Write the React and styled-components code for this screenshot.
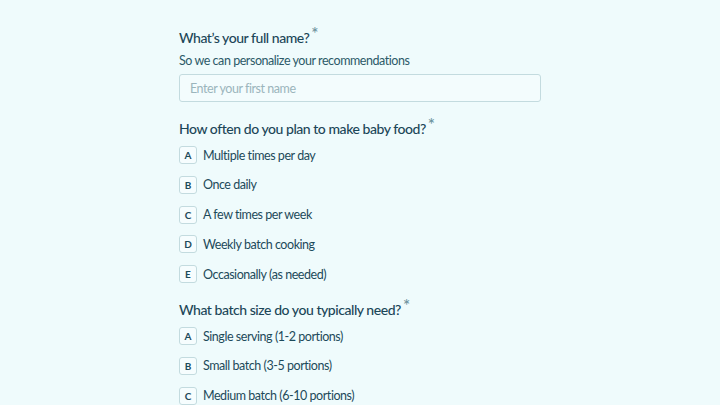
import styled, { createGlobalStyle } from 'styled-components';

const GlobalStyle = createGlobalStyle`
  html, body {
    margin: 0;
    padding: 0;
    background: #effbfc;
  }
  body {
    font-family: Lato, "Noto Sans", sans-serif;
    color: #1d4a5a;
  }
`;

const Page = styled.div`
  width: 720px;
  height: 405px;
  overflow: hidden;
  display: flex;
  justify-content: center;
`;

const Form = styled.div`
  width: 362px;
  padding-top: 28px;
`;

const Question = styled.div`
  margin-bottom: ${(p) => p.mb || 10}px;
`;

const Title = styled.h2`
  margin: 0;
  font-size: 14px;
  font-weight: 500;
  line-height: 20px;
  letter-spacing: -0.45px;
  color: #1b4658;
`;

const Star = styled.span`
  display: inline-block;
  font-size: 17px;
  line-height: 10px;
  color: #6c929c;
  margin-left: 2px;
  position: relative;
  top: -3px;
`;

const Subtitle = styled.p`
  margin: 3px 0 3px;
  font-size: 12.5px;
  line-height: 20px;
  color: #2c5a68;
  letter-spacing: -0.45px;
`;

const Input = styled.input`
  box-sizing: border-box;
  width: 100%;
  height: 28px;
  border: 1px solid #c3dbdf;
  border-radius: 3px;
  background: #f3fcfd;
  padding: 0 10px;
  font-family: inherit;
  font-size: 12.5px;
  letter-spacing: -0.45px;
  color: #1d4a5a;
  outline: none;
  &::placeholder {
    color: #9bb5bc;
  }
`;

const Options = styled.div`
  display: flex;
  flex-direction: column;
  gap: 11.75px;
  margin-top: 7px;
`;

const Option = styled.div`
  display: flex;
  align-items: center;
  gap: 6px;
  height: 18px;
`;

const Badge = styled.span`
  box-sizing: border-box;
  width: 18px;
  height: 18px;
  border: 1px solid #c3dbdf;
  border-radius: 3px;
  background: #f6fdfe;
  display: flex;
  align-items: center;
  justify-content: center;
  font-size: 10px;
  font-weight: 700;
  color: #1d4a5a;
`;

const Label = styled.span`
  font-size: 12.5px;
  color: #1d4a5a;
  letter-spacing: -0.45px;
`;

const frequency = [
  'Multiple times per day',
  'Once daily',
  'A few times per week',
  'Weekly batch cooking',
  'Occasionally (as needed)',
];

const batch = [
  'Single serving (1-2 portions)',
  'Small batch (3-5 portions)',
  'Medium batch (6-10 portions)',
];

function Choice({ items }) {
  return (
    <Options>
      {items.map((item, i) => (
        <Option key={item}>
          <Badge>{String.fromCharCode(65 + i)}</Badge>
          <Label>{item}</Label>
        </Option>
      ))}
    </Options>
  );
}

export default function App() {
  return (
    <Page>
      <GlobalStyle />
      <Form>
        <Question mb={17}>
          <Title>
            What’s your full name?<Star>*</Star>
          </Title>
          <Subtitle>So we can personalize your recommendations</Subtitle>
          <Input placeholder="Enter your first name" />
        </Question>
        <Question mb={17}>
          <Title>
            How often do you plan to make baby food?<Star>*</Star>
          </Title>
          <Choice items={frequency} />
        </Question>
        <Question>
          <Title>
            What batch size do you typically need?<Star>*</Star>
          </Title>
          <Choice items={batch} />
        </Question>
      </Form>
    </Page>
  );
}
